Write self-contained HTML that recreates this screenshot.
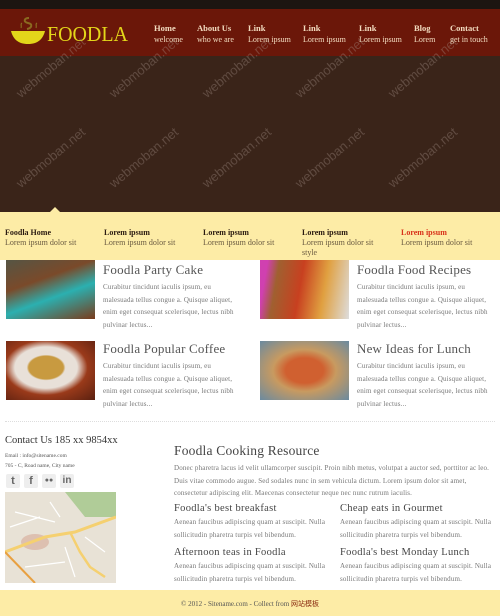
<!DOCTYPE html>
<html><head><meta charset="utf-8"><style>
*{margin:0;padding:0;box-sizing:border-box}
body{width:500px;height:616px;overflow:hidden;background:#fff;font-family:"Liberation Serif","DejaVu Serif",serif;position:relative}
.a{position:absolute}
.wm{position:absolute;color:rgba(170,150,140,.35);font:13px "Liberation Sans",sans-serif;transform:rotate(-40deg);white-space:nowrap}
.nav{color:#f3dcc0;font-size:8px;line-height:11px}
.nav b{font-size:8.5px;display:block}
.tab{font-size:8px;color:#6a5a40;line-height:10px}
.tab b{color:#2a1a10;display:block;font-size:8px}
h3{font-weight:normal;color:#555;font-size:13px;letter-spacing:.2px}
p{color:#777;font-size:7px;line-height:12.5px;letter-spacing:.15px}
h4{font-weight:normal;color:#444;font-size:10.5px;letter-spacing:.3px}
</style></head><body>
<div class="a" style="left:0;top:0;width:500px;height:9px;background:#1c1511"></div>
<div class="a" style="left:0;top:9px;width:500px;height:47px;background:#6b1709"></div>
<div class="a" style="left:0;top:56px;width:500px;height:156px;background:#3a2419"></div>
<svg class="a" style="left:10px;top:14px" width="36" height="32" viewBox="0 0 36 32">
<path d="M19 4c-5 0-6 4-1 5s4 5-1 6" stroke="#8a6a20" stroke-width="2" fill="none"/>
<path d="M12 9c-2 1 0 3-1 5M27 9c-2 1 0 3-1 5" stroke="#8a6a20" stroke-width="1.2" fill="none"/>
<path d="M1 17h34c-2 8-7 13-17 13S3 25 1 17z" fill="#e3d61a"/>
</svg>
<div class="a" style="left:47px;top:22px;color:#e3d61a;font-size:21px;transform:scaleX(.95);transform-origin:left;-webkit-text-stroke:0 transparent;font-weight:normal">FOODLA</div>
<div class="a nav" style="left:154px;top:23px"><b>Home</b>welcome</div>
<div class="a nav" style="left:197px;top:23px"><b>About Us</b>who we are</div>
<div class="a nav" style="left:248px;top:23px"><b>Link</b>Lorem ipsum</div>
<div class="a nav" style="left:303px;top:23px"><b>Link</b>Lorem ipsum</div>
<div class="a nav" style="left:359px;top:23px"><b>Link</b>Lorem ipsum</div>
<div class="a nav" style="left:414px;top:23px"><b>Blog</b>Lorem</div>
<div class="a nav" style="left:450px;top:23px"><b>Contact</b>get in touch</div>
<div class="a" style="left:0;top:212px;width:500px;height:48px;background:#fdeca6"></div>
<div class="a" style="left:49px;top:207px;width:0;height:0;border-left:6px solid transparent;border-right:6px solid transparent;border-bottom:6px solid #fdeca6"></div>
<div class="a tab" style="left:5px;top:228px"><b>Foodla Home</b>Lorem ipsum dolor sit</div>
<div class="a tab" style="left:104px;top:228px"><b>Lorem ipsum</b>Lorem ipsum dolor sit</div>
<div class="a tab" style="left:203px;top:228px"><b>Lorem ipsum</b>Lorem ipsum dolor sit</div>
<div class="a tab" style="left:302px;top:228px"><b>Lorem ipsum</b>Lorem ipsum dolor sit<br>style</div>
<div class="a tab" style="left:401px;top:228px"><b style="color:#d8321a">Lorem ipsum</b>Lorem ipsum dolor sit</div>
<div class="a" style="left:6px;top:260px;width:89px;height:59px;background:linear-gradient(160deg,#554 0%,#7a4a2a 35%,#2bb0b0 60%,#7a3a1a 100%)"></div>
<div class="a" style="left:103px;top:262px;width:140px"><h3>Foodla Party Cake</h3><p style="margin-top:3px">Curabitur tincidunt iaculis ipsum, eu malesuada tellus congue a. Quisque aliquet, enim eget consequat scelerisque, lectus nibh pulvinar lectus...</p></div>
<div class="a" style="left:260px;top:260px;width:89px;height:59px;background:linear-gradient(100deg,#d040b0 0 8%,#a06030 20%,#c84020 45%,#e0a040 70%,#ddd 100%)"></div>
<div class="a" style="left:357px;top:262px;width:140px"><h3>Foodla Food Recipes</h3><p style="margin-top:3px">Curabitur tincidunt iaculis ipsum, eu malesuada tellus congue a. Quisque aliquet, enim eget consequat scelerisque, lectus nibh pulvinar lectus...</p></div>
<div class="a" style="left:6px;top:341px;width:89px;height:59px;background:radial-gradient(ellipse at 45% 45%,#c89a40 0 25%,#e8e0d8 28% 45%,#9a3a1a 60%,#5a2010 100%)"></div>
<div class="a" style="left:103px;top:341px;width:140px"><h3>Foodla Popular Coffee</h3><p style="margin-top:3px">Curabitur tincidunt iaculis ipsum, eu malesuada tellus congue a. Quisque aliquet, enim eget consequat scelerisque, lectus nibh pulvinar lectus...</p></div>
<div class="a" style="left:260px;top:341px;width:89px;height:59px;background:radial-gradient(ellipse at 50% 50%,#d06030 0 30%,#c89a60 50%,#6a8aa0 100%)"></div>
<div class="a" style="left:357px;top:341px;width:140px"><h3>New Ideas for Lunch</h3><p style="margin-top:3px">Curabitur tincidunt iaculis ipsum, eu malesuada tellus congue a. Quisque aliquet, enim eget consequat scelerisque, lectus nibh pulvinar lectus...</p></div>
<div class="a" style="left:5px;top:421px;width:490px;border-top:1px dotted #ddd"></div>
<div class="a" style="left:5px;top:435px;color:#333;font-size:10.5px">Contact Us 185 xx 9854xx</div>
<div class="a" style="left:5px;top:451px;color:#555;font-size:5.5px;line-height:10px">Email : info@sitename.com<br>705 - C, Road name, City name</div>
<div class="a" style="left:6px;top:474px;display:flex;gap:4px">
<div style="width:14px;height:14px;background:#eee;border-radius:2px;font:bold 11px 'Liberation Sans';color:#666;text-align:center;line-height:14px">t</div>
<div style="width:14px;height:14px;background:#eee;border-radius:2px;font:bold 11px 'Liberation Sans';color:#666;text-align:center;line-height:14px">f</div>
<div style="width:14px;height:14px;background:#eee;border-radius:2px;font:bold 7px 'Liberation Sans';color:#666;text-align:center;line-height:14px">●●</div>
<div style="width:14px;height:14px;background:#eee;border-radius:2px;font:bold 10px 'Liberation Sans';color:#666;text-align:center;line-height:14px">in</div>
</div>
<svg class="a" style="left:5px;top:492px" width="111" height="91" viewBox="0 0 111 91">
<rect width="111" height="91" fill="#e8e2d6"/>
<path d="M60 0h51v25H80z" fill="#b0cc98"/>
<ellipse cx="30" cy="50" rx="14" ry="8" fill="#ddc0b0"/>
<path d="M0 60L40 45L70 40L111 25" stroke="#f5d070" stroke-width="3" fill="none"/>
<path d="M65 40L75 60L85 75L100 85" stroke="#f5d070" stroke-width="2.5" fill="none"/>
<path d="M0 60L30 91" stroke="#e8a040" stroke-width="2" fill="none"/>
<path d="M10 20L50 30M20 75L60 70M80 45L100 60M45 10L55 25M5 35L35 25M60 55L70 85" stroke="#fff" stroke-width="1.2"/>
</svg>
<div class="a" style="left:174px;top:443px;color:#444;font-size:13.5px;letter-spacing:.2px">Foodla Cooking Resource</div>
<div class="a" style="left:174px;top:462px;width:322px"><p>Donec pharetra lacus id velit ullamcorper suscipit. Proin nibh metus, volutpat a auctor sed, porttitor ac leo. Duis vitae commodo augue. Sed sodales nunc in sem vehicula dictum. Lorem ipsum dolor sit amet, consectetur adipiscing elit. Maecenas consectetur neque nec nunc rutrum iaculis.</p></div>
<div class="a" style="left:174px;top:503px;width:160px"><h4>Foodla's best breakfast</h4><p style="margin-top:2px">Aenean faucibus adipiscing quam at suscipit. Nulla sollicitudin pharetra turpis vel bibendum.</p></div>
<div class="a" style="left:340px;top:503px;width:160px"><h4>Cheap eats in Gourmet</h4><p style="margin-top:2px">Aenean faucibus adipiscing quam at suscipit. Nulla sollicitudin pharetra turpis vel bibendum.</p></div>
<div class="a" style="left:174px;top:547px;width:160px"><h4>Afternoon teas in Foodla</h4><p style="margin-top:2px">Aenean faucibus adipiscing quam at suscipit. Nulla sollicitudin pharetra turpis vel bibendum.</p></div>
<div class="a" style="left:340px;top:547px;width:160px"><h4>Foodla's best Monday Lunch</h4><p style="margin-top:2px">Aenean faucibus adipiscing quam at suscipit. Nulla sollicitudin pharetra turpis vel bibendum.</p></div>
<div class="a" style="left:0;top:590px;width:500px;height:26px;background:#fdeca6"></div>
<div class="a" style="left:0;top:599px;width:500px;text-align:center;font-size:7px;color:#555;font-family:'Liberation Serif','Noto Sans CJK SC',serif">© 2012 - Sitename.com - Collect from <span style="color:#8a2a10">网站模板</span></div>
<div class="wm" style="left:8px;top:60px">webmoban.net</div>
<div class="wm" style="left:101px;top:60px">webmoban.net</div>
<div class="wm" style="left:194px;top:60px">webmoban.net</div>
<div class="wm" style="left:287px;top:60px">webmoban.net</div>
<div class="wm" style="left:380px;top:60px">webmoban.net</div>
<div class="wm" style="left:8px;top:150px">webmoban.net</div>
<div class="wm" style="left:101px;top:150px">webmoban.net</div>
<div class="wm" style="left:194px;top:150px">webmoban.net</div>
<div class="wm" style="left:287px;top:150px">webmoban.net</div>
<div class="wm" style="left:380px;top:150px">webmoban.net</div>
</body></html>
